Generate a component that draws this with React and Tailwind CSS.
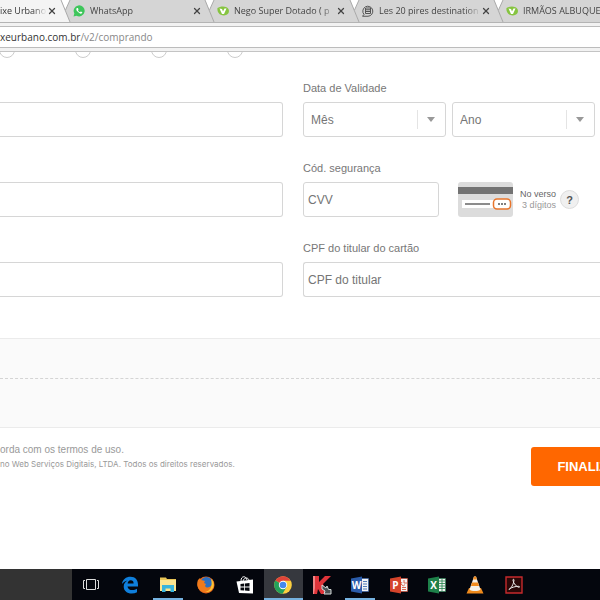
import React from "react";
import { X } from "lucide-react";

const WhatsAppIcon = () => (
  <svg viewBox="0 0 24 24" className="w-3 h-3 shrink-0">
    <path d="M1 23l1.700-6A11 11 0 1 1 7 21.300z" fill="#3ec65b" />
    <path
      d="M8 6c-2 1-2 4 1 7s6 5 8 4 2-3 1-3l-2.500-1.200-1.500 1.500c-2-.8-3.200-2-4-4L11 9 10 6.400C9.500 5.700 9 5.700 8 6z"
      fill="#fff"
    />
  </svg>
);

const FishIcon = () => (
  <svg viewBox="0 0 24 24" className="w-3 h-3 shrink-0">
    <path d="M1 6c4-3 12-4 17-2 6 2 7 8 5 12s-9 6-14 4C3 18 0 12 1 6z" fill="#86c440" />
    <path d="M5 7l5 1 2 5 3-6h4l-5 11h-4z" fill="#fff" />
  </svg>
);

const BadgeIcon = () => (
  <svg viewBox="0 0 24 24" className="w-3 h-3 shrink-0" fill="none" stroke="#555" strokeWidth="2">
    <path d="M4 19A10 10 0 1 1 12 22.500H1z" />
    <path d="M8 6h9v11H7V6M8 9.500h8M8 13h8" />
  </svg>
);

const tabs = [
  { title: "WhatsApp", icon: WhatsAppIcon },
  { title: "Nego Super Dotado ( p", icon: FishIcon },
  { title: "Les 20 pires destination", icon: BadgeIcon },
  { title: "IRMÃOS ALBUQUE", icon: FishIcon },
];

const TaskViewIcon = () => (
  <svg viewBox="0 0 18 18" className="w-[18px] h-[18px]" fill="none" stroke="#ddd">
    <path d="M4.500 3.500h9v10h-9zM3 4.500H1.500v8H3M15 4.500h1.500v8H15" />
  </svg>
);

const EdgeIcon = () => (
  <svg viewBox="0 0 18 18" className="w-[18px] h-[18px]">
    <path
      d="M1 8C1.500 3.500 5 .8 9.500.8c5 0 7.500 3.500 7.500 7.700v2H6.500c.2 2.500 2.400 3.600 4.800 3.600 1.800 0 3.400-.5 4.700-1.300v3.500c-1.600.8-3.400 1.200-5.300 1.200-4.800 0-8-2.700-8-7 0-2.700 1.500-4.800 4-6C4 5 2.500 6.200 1 8zm5.600-.5h6c0-2-1-3.200-2.900-3.200-1.800 0-2.900 1.300-3.100 3.200z"
      fill="#0f7fdc"
    />
  </svg>
);

const FolderIcon = () => (
  <svg viewBox="0 0 18 18" className="w-[18px] h-[18px]">
    <path d="M1 1.500h6l1 1.500h9V15H1z" fill="#e9c557" />
    <path d="M1 4h16v11H1z" fill="#fbe590" />
    <path d="M3 9h12v7h-3.500v-3.500h-5V16H3z" fill="#38b4dc" />
  </svg>
);

const FirefoxIcon = () => (
  <svg viewBox="0 0 18 18" className="w-[18px] h-[18px]">
    <circle cx="9" cy="9" r="8.500" fill="#e8681a" />
    <circle cx="9.500" cy="7" r="6" fill="#2d6fc0" />
    <path d="M1 4l2-2 1 2 4 1-1 2 2 1-1 2c2 3 5 1 7-1 1-3 0-6-1-7 3 2 4 7 2 10-3 5-10 6-14 1C-.5 10 .2 6 1 4z" fill="#f07a1b" />
    <path d="M14 3c2.500 2 3.600 6 2 9-2 3.500-6 4.500-8 4 5-1 8-5 6-13z" fill="#fbc534" />
  </svg>
);

const StoreIcon = () => (
  <svg viewBox="0 0 18 18" className="w-[18px] h-[18px]">
    <path d="M5 5C5-.5 10-.5 11 4M7 5c1-4 6-4 6 0" fill="none" stroke="#fff" />
    <path d="M.5 5.500L17 3.500v14L3 17z" fill="#fff" />
    <path d="M4.500 8l3.700-.4v3H4.500zM9 7.400l4.500-.5v3.700H9zM4.500 11.400h3.700v3.100l-3.700-.3zM9 11.400h4.500V15L9 14.600z" fill="#05060c" />
  </svg>
);

const ChromeIcon = () => (
  <svg viewBox="0 0 18 18" className="w-[18px] h-[18px]">
    <circle cx="9" cy="9" r="8.800" fill="#fcd040" />
    <path d="M9 9L1.400 4.600A8.800 8.800 0 0 1 16.600 4.800H9z" fill="#e0443a" />
    <path d="M1.400 4.600A8.800 8.800 0 0 0 8.600 17.800L12.500 11 9 9z" fill="#23a15a" />
    <circle cx="9" cy="9" r="4.200" fill="#fff" />
    <circle cx="9" cy="9" r="3.300" fill="#4489ee" />
  </svg>
);

const KasperskyIcon = () => (
  <svg viewBox="0 0 20 20" className="w-5 h-5">
    <path d="M1 1h6v6l6-6h6l-8 8 4 10H9l-3-5-1 5H1z" fill="#e0343a" />
    <path d="M1 1h2v12L2 19H1z" fill="#ef8585" />
    <path d="M10 10l4 3 1-2 1.500 3.500H19V19h-7l1-3-3-2z" fill="#4a5255" stroke="#d4dada" />
  </svg>
);

// Word, PowerPoint and Excel share the same tile
const OfficeIcon = ({ letter, color, children }) => (
  <svg viewBox="0 0 18 18" className="w-[18px] h-[18px]">
    <path d="M9 2.500h8.500v13H9z" fill="#f4f4f4" stroke={color} strokeWidth=".6" />
    <g fill="none" stroke={color} strokeWidth=".8">{children}</g>
    <path d="M0 2.500L11 .5v17L0 15.500z" fill={color} />
    <text x="5.500" y="12.500" textAnchor="middle" fill="#fff" className="font-['Open_Sans',sans-serif] text-[10px] font-bold">
      {letter}
    </text>
  </svg>
);

const WordIcon = () => (
  <OfficeIcon letter="W" color="#2b5caa">
    <path d="M12 5.500h4M12 8h4M12 10.500h4M12 13h4" />
  </OfficeIcon>
);

const PowerPointIcon = () => (
  <OfficeIcon letter="P" color="#d5442b">
    <path d="M12 11.500h4M12 13.500h4M14 4v3h3M12 6a2 2 0 1 0 3 2.500" />
  </OfficeIcon>
);

const ExcelIcon = () => (
  <OfficeIcon letter="X" color="#1e8049">
    <path d="M11 5h6M11 7.500h6M11 10h6M11 12.500h6M14 3v12" />
  </OfficeIcon>
);

const VlcIcon = () => (
  <svg viewBox="0 0 18 18" className="w-[18px] h-[18px]">
    <path d="M3 12h12l2.500 5.500H.5z" fill="#ef8a1c" />
    <path d="M8 .5h2l4.500 13c-2 2-9 2-11 0z" fill="#f3f0ea" />
    <path d="M8 .5h2l1 3H7zM6 6.500h6l1 3.500H5z" fill="#f08a1e" />
  </svg>
);

const AcrobatIcon = () => (
  <svg viewBox="0 0 18 18" className="w-[18px] h-[18px]">
    <path d="M1 1h16v16H1z" fill="#2a0808" stroke="#c62a2c" strokeWidth="1.400" />
    <path
      d="M4 13.500c2-1 4.500-5 5-9.500 0-1-1.200-1-1 .3.500 3.500 3.500 6.500 6 7 1 0 .8-1-.5-1-3 0-6.500 1-9 2.500z"
      fill="none"
      stroke="#eee"
    />
  </svg>
);

const taskbarItems = [
  { name: "Visão de tarefas", icon: TaskViewIcon },
  { name: "Edge", icon: EdgeIcon },
  { name: "Explorador", icon: FolderIcon, open: true },
  { name: "Firefox", icon: FirefoxIcon },
  { name: "Loja", icon: StoreIcon },
  { name: "Chrome", icon: ChromeIcon, open: true, active: true },
  { name: "Kaspersky", icon: KasperskyIcon },
  { name: "Word", icon: WordIcon, open: true },
  { name: "PowerPoint", icon: PowerPointIcon },
  { name: "Excel", icon: ExcelIcon },
  { name: "VLC", icon: VlcIcon },
  { name: "Acrobat", icon: AcrobatIcon },
];

function TabEdge({ active }) {
  return (
    <svg viewBox="0 0 13 22" className="w-[13px] h-[22px] shrink-0">
      {active && <path d="M0 0h1l9 22H0z" fill="#f4f4f4" />}
      <path d="M1 0h9L5.500 10z" fill="#fff" />
      <path d="M1 0l9 22M10 0L5.500 10" fill="none" stroke="#aaa" />
    </svg>
  );
}

function TabStrip() {
  return (
    <div className="flex h-[23px] overflow-hidden bg-[#d5d5d5] border-b border-[#b4b4b4] text-[9px] text-[#444]">
      <div className="flex w-[60px] shrink-0 items-center bg-[#f4f4f4]">
        <span className="flex-1 overflow-hidden whitespace-nowrap text-[#333] [mask-image:linear-gradient(to_right,black_70%,transparent)]">
          ixe Urbano
        </span>
        <button aria-label="Fechar" className="pr-[3px]">
          <X className="w-[10px] h-[10px]" strokeWidth={3} />
        </button>
      </div>
      {tabs.map((tab, i) => {
        const Icon = tab.icon;
        return (
          <div key={tab.title} className="flex w-[145px] shrink-0 items-center even:-mr-px">
            <TabEdge active={i === 0} />
            <Icon />
            <span className="ml-[5px] flex-1 overflow-hidden whitespace-nowrap [mask-image:linear-gradient(to_right,black_85%,transparent)]">
              {tab.title}
            </span>
            <button aria-label="Fechar" className="pr-[3px]">
              <X className="w-[10px] h-[10px]" strokeWidth={3} />
            </button>
          </div>
        );
      })}
    </div>
  );
}

const boxClass =
  "block h-[35px] rounded-[3px] border border-[#d6d6d6] bg-white text-[12px] text-[#757575] placeholder:text-[#757575]";
const labelClass = "block mb-[6px] text-[11px] leading-4 text-[#777]";

function DateSelect({ name }) {
  return (
    <div className="relative w-[143px]">
      <select aria-label={name} className={`${boxClass} w-full appearance-none px-[7px]`}>
        <option>{name}</option>
      </select>
      <span className="pointer-events-none absolute inset-y-2 right-0 flex w-[29px] items-center justify-center border-l border-[#e4e4e4] pr-[2px]">
        <svg viewBox="0 0 8 5" className="w-2 h-[5px]">
          <path d="M0 0h8L4 5z" fill="#999" />
        </svg>
      </span>
    </div>
  );
}

function CardBack() {
  return (
    <svg viewBox="0 0 55 35" className="w-[55px] h-[35px] shrink-0">
      <rect width="55" height="35" rx="3" fill="#dcdcdc" />
      <path d="M0 5h55v7H0z" fill="#737373" />
      <path d="M4 18h32v8H4z" fill="#fff" />
      <path d="M7 22h25" stroke="#666" strokeWidth="1.500" />
      <rect x="35.500" y="17" width="17" height="10" rx="3.500" fill="#fff" stroke="#e8752c" strokeWidth="1.500" />
      <path d="M40 22h2M43 22h2M46 22h2" stroke="#555" strokeWidth="1.500" />
    </svg>
  );
}

function App() {
  return (
    <div className="flex min-h-screen flex-col overflow-hidden bg-white font-['Liberation_Sans',Arial,sans-serif]">
      {/* Browser chrome */}
      <header className="font-['Open_Sans',sans-serif]">
        <TabStrip />
        <div className="border-b border-[#c4c4c4] bg-[#f2f2f2] py-[3px]">
          <div className="h-[22px] border-y border-[#bcbcbc] bg-white text-[10px] leading-5 text-[#333]">
            xeurbano.com.br<span className="text-[#888]">/v2/comprando</span>
          </div>
        </div>
      </header>

      <main className="flex-1">
        {/* Steps */}
        <div className="flex h-[6px] items-end gap-[60px] overflow-hidden">
          {[1, 2, 3, 4].map((step) => (
            <span key={step} className="h-4 w-4 shrink-0 rounded-full border border-[#ccc] first:-ml-px" />
          ))}
        </div>

        <form>
          <div className="grid grid-cols-[283px_1fr] gap-x-5 gap-y-[23px] pt-[22px]">
            <div className="pt-[22px]">
              <input aria-label="Número do cartão" className={`${boxClass} w-full rounded-l-none border-l-0 px-2`} />
            </div>
            <div>
              <span className={labelClass}>Data de Validade</span>
              <div className="flex gap-[6px]">
                <DateSelect name="Mês" />
                <DateSelect name="Ano" />
              </div>
            </div>

            <div className="pt-[22px]">
              <input aria-label="Nome" className={`${boxClass} w-full rounded-l-none border-l-0 px-2`} />
            </div>
            <div>
              <label htmlFor="cvv" className={labelClass}>Cód. segurança</label>
              <div className="flex items-center">
                <input id="cvv" placeholder="CVV" className={`${boxClass} w-[136px] px-1`} />
                <div className="ml-[19px] flex items-center">
                  <CardBack />
                  <p className="ml-[7px] text-right text-[9px] leading-[11px] text-[#666]">
                    No verso
                    <br />
                    <span className="text-[#999]">3 dígitos</span>
                  </p>
                  <button
                    type="button"
                    className="ml-1 h-[19px] w-[19px] rounded-full border border-[#ddd] bg-[#f0f0f0] text-[11px] leading-4 font-bold text-[#555]"
                  >
                    ?
                  </button>
                </div>
              </div>
            </div>

            <div className="pt-[22px]">
              <input aria-label="Sobrenome" className={`${boxClass} w-full rounded-l-none border-l-0 px-2`} />
            </div>
            <div>
              <label htmlFor="cpf" className={labelClass}>CPF do titular do cartão</label>
              <input id="cpf" placeholder="CPF do titular" className={`${boxClass} w-full rounded-r-none border-r-0 px-1`} />
            </div>
          </div>

          {/* Summary */}
          <div className="mt-[41px] border-y border-[#ebebeb] bg-[#fafafa]">
            <div className="h-10 border-b border-dashed border-[#d4d4d4]" />
            <div className="h-12" />
          </div>

          <div className="flex justify-between overflow-hidden pt-[15px]">
            <div className="text-[#999]">
              <p className="text-[10px] leading-[14px]">orda com os termos de uso.</p>
              <p className="font-[Inter,sans-serif] text-[8px] leading-[14px]">
                no Web Serviços Digitais, LTDA. Todos os direitos reservados.
              </p>
            </div>
            <button
              type="button"
              className="mt-1 -mr-[52px] h-[39px] shrink-0 rounded-[3px] bg-[#ff6700] px-[26px] text-[13px] font-bold text-white"
            >
              FINALIZAR
            </button>
          </div>
        </form>
      </main>

      {/* Taskbar */}
      <footer className="flex h-[31px] bg-[#04060d]">
        <div className="w-[72px] shrink-0 bg-[#333]" />
        <div className="grid w-[461px] grid-cols-12">
          {taskbarItems.map((item) => {
            const Icon = item.icon;
            return (
              <button
                key={item.name}
                aria-label={item.name}
                className={`relative flex items-center justify-center ${item.active ? "bg-[#36383e]" : ""}`}
              >
                <Icon />
                {item.open && (
                  <span className={`absolute bottom-0 h-[2px] bg-[#76b2e0] ${item.active ? "inset-x-0" : "inset-x-1"}`} />
                )}
              </button>
            );
          })}
        </div>
      </footer>
    </div>
  );
}

export default App;
